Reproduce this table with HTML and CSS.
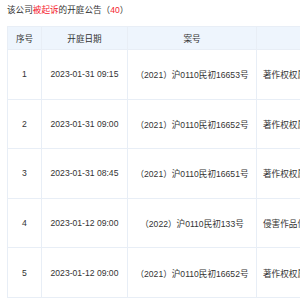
FILE: index.html
```html
<!DOCTYPE html>
<html lang="zh-CN">
<head>
<meta charset="utf-8">
<link rel="stylesheet" href="styles.css">
</head>
<body>
<div class="page">
  <div class="title">该公司<span class="red">被起诉</span>的开庭公告（<span class="count">40</span>）</div>
  <table class="grid">
    <colgroup>
      <col class="c-no"><col class="c-date"><col class="c-case"><col class="c-cause">
    </colgroup>
    <thead>
      <tr class="head"><th>序号</th><th>开庭日期</th><th>案号</th><th>案由</th></tr>
    </thead>
    <tbody>
      <tr><td>1</td><td>2023-01-31 09:15</td><td>（2021）沪0110民初16653号</td><td class="cause">著作权权属、侵权纠纷</td></tr>
      <tr><td>2</td><td>2023-01-31 09:00</td><td>（2021）沪0110民初16652号</td><td class="cause">著作权权属、侵权纠纷</td></tr>
      <tr><td>3</td><td>2023-01-31 08:45</td><td>（2021）沪0110民初16651号</td><td class="cause">著作权权属、侵权纠纷</td></tr>
      <tr><td>4</td><td>2023-01-12 09:00</td><td>（2022）沪0110民初133号</td><td class="cause">侵害作品信息网络传播权纠纷</td></tr>
      <tr><td>5</td><td>2023-01-12 09:00</td><td>（2021）沪0110民初16652号</td><td class="cause">著作权权属、侵权纠纷</td></tr>
    </tbody>
  </table>
</div>
</body>
</html>
```

FILE: styles.css
```css
html, body {
  margin: 0;
  padding: 0;
  overflow: hidden;
  background: #fff;
}
.page {
  padding: 0 0 0 7px;
  width: 600px;
  font-family: "Liberation Sans", "Noto Sans CJK SC", sans-serif;
  font-size: 8.6px;
  color: #333;
}
.title {
  height: 20px;
  line-height: 20px;
  margin-bottom: 6px;
  color: #333;
}
.red { color: #f5222d; }
.count { color: #f5222d; }
.grid {
  border-collapse: collapse;
  table-layout: fixed;
  width: 450px;
}
.c-no { width: 34px; }
.c-date { width: 86px; }
.c-case { width: 129px; }
.c-cause { width: 201px; }
.grid th, .grid td {
  border: 1px solid #e8eef6;
  padding: 0;
  text-align: center;
  white-space: nowrap;
  overflow: hidden;
}
.grid th {
  background: #eef5fd;
  height: 22px;
  font-weight: normal;
  color: #333;
}
.grid td {
  height: 48.6px;
  color: #333;
}
.grid td.cause {
  text-align: left;
  padding-left: 6px;
}
```
